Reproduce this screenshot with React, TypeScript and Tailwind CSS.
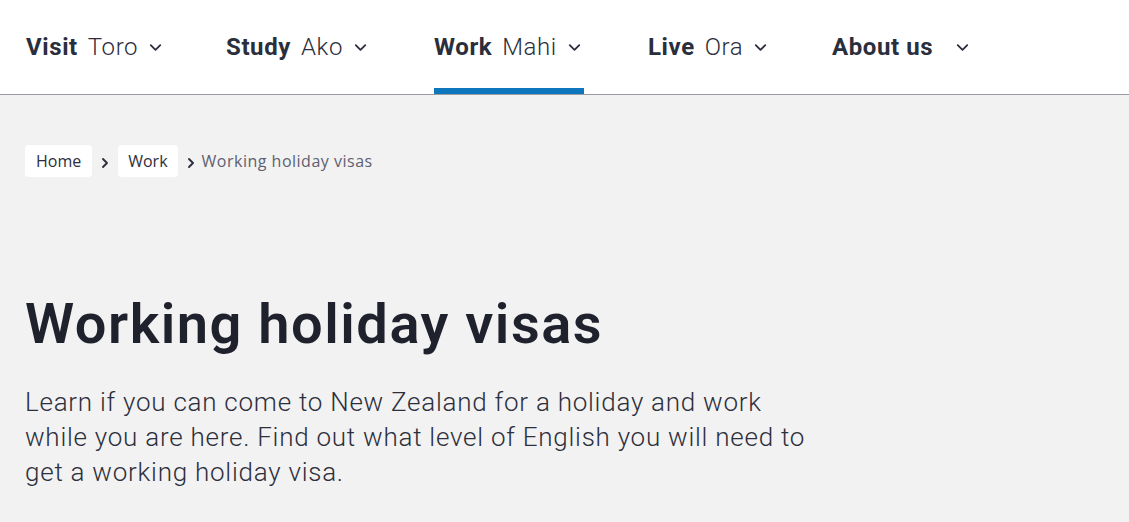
import { ChevronDown, ChevronRight } from "lucide-react";

const nav = [
  { en: "Visit", mi: "Toro", w: "w-[200px]", active: false },
  { en: "Study", mi: "Ako", w: "w-[208px]", active: false },
  { en: "Work", mi: "Mahi", w: "w-[214px]", active: true },
  { en: "Live", mi: "Ora", w: "w-[184px]", active: false },
  { en: "About us", mi: "", w: "w-[160px]", active: false },
];

export default function App() {
  return (
    <div className="min-h-[522px] bg-[#f2f2f2] font-['Roboto',sans-serif] text-[#2a2d3b]">
      <header className="h-[95px] bg-white border-b border-[#9b9ba6] pl-[26px] flex">
        {nav.map((n) => (
          <div key={n.en} className={`${n.w} h-full flex`}>
            <div className="relative flex items-center h-full">
              <span className="text-[24px] font-bold tracking-[0.6px] text-[#2b2e3c]">{n.en}</span>
              {n.mi && (
                <span className="ml-[10px] text-[24px] font-light tracking-[0.6px] text-[#2b2e3c]">{n.mi}</span>
              )}
              <ChevronDown
                size={19}
                strokeWidth={2.3}
                className={`text-[#2b2e3c] mt-[1px] ${n.mi ? "ml-[8px]" : "ml-[20px]"}`}
              />
              {n.active && <div className="absolute left-0 right-0 bottom-0 h-[6px] bg-[#0e76bc]" />}
            </div>
          </div>
        ))}
      </header>

      <main className="px-[25px]">
        <nav className="pt-[50px] flex items-center text-[16px] font-['Open_Sans',sans-serif]">
          <a className="bg-white rounded-[4px] px-[11px] h-[32px] flex items-center text-[#2b2e3c]">Home</a>
          <ChevronRight size={16} strokeWidth={2.8} className="mx-[5px] mt-[3px] text-[#2b2e3c]" />
          <a className="bg-white rounded-[4px] px-[10px] h-[32px] flex items-center text-[#2b2e3c]">Work</a>
          <ChevronRight size={16} strokeWidth={2.8} className="ml-[5px] mr-[3px] mt-[3px] text-[#2b2e3c]" />
          <span className="text-[#5e6070] tracking-[0.5px]">Working holiday visas</span>
        </nav>

        <h1 className="mt-[117px] text-[56px] leading-[60px] font-semibold tracking-[1.5px] text-[#1f222d]">
          Working holiday visas
        </h1>

        <p className="mt-[31px] text-[26px] leading-[35px] font-light tracking-[0.75px] text-[#2d2f3c]">
          <span className="block">Learn if you can come to New Zealand for a holiday and work</span>
          <span className="block">while you are here. Find out what level of English you will need to</span>
          <span className="block">get a working holiday visa.</span>
        </p>
      </main>
    </div>
  );
}
